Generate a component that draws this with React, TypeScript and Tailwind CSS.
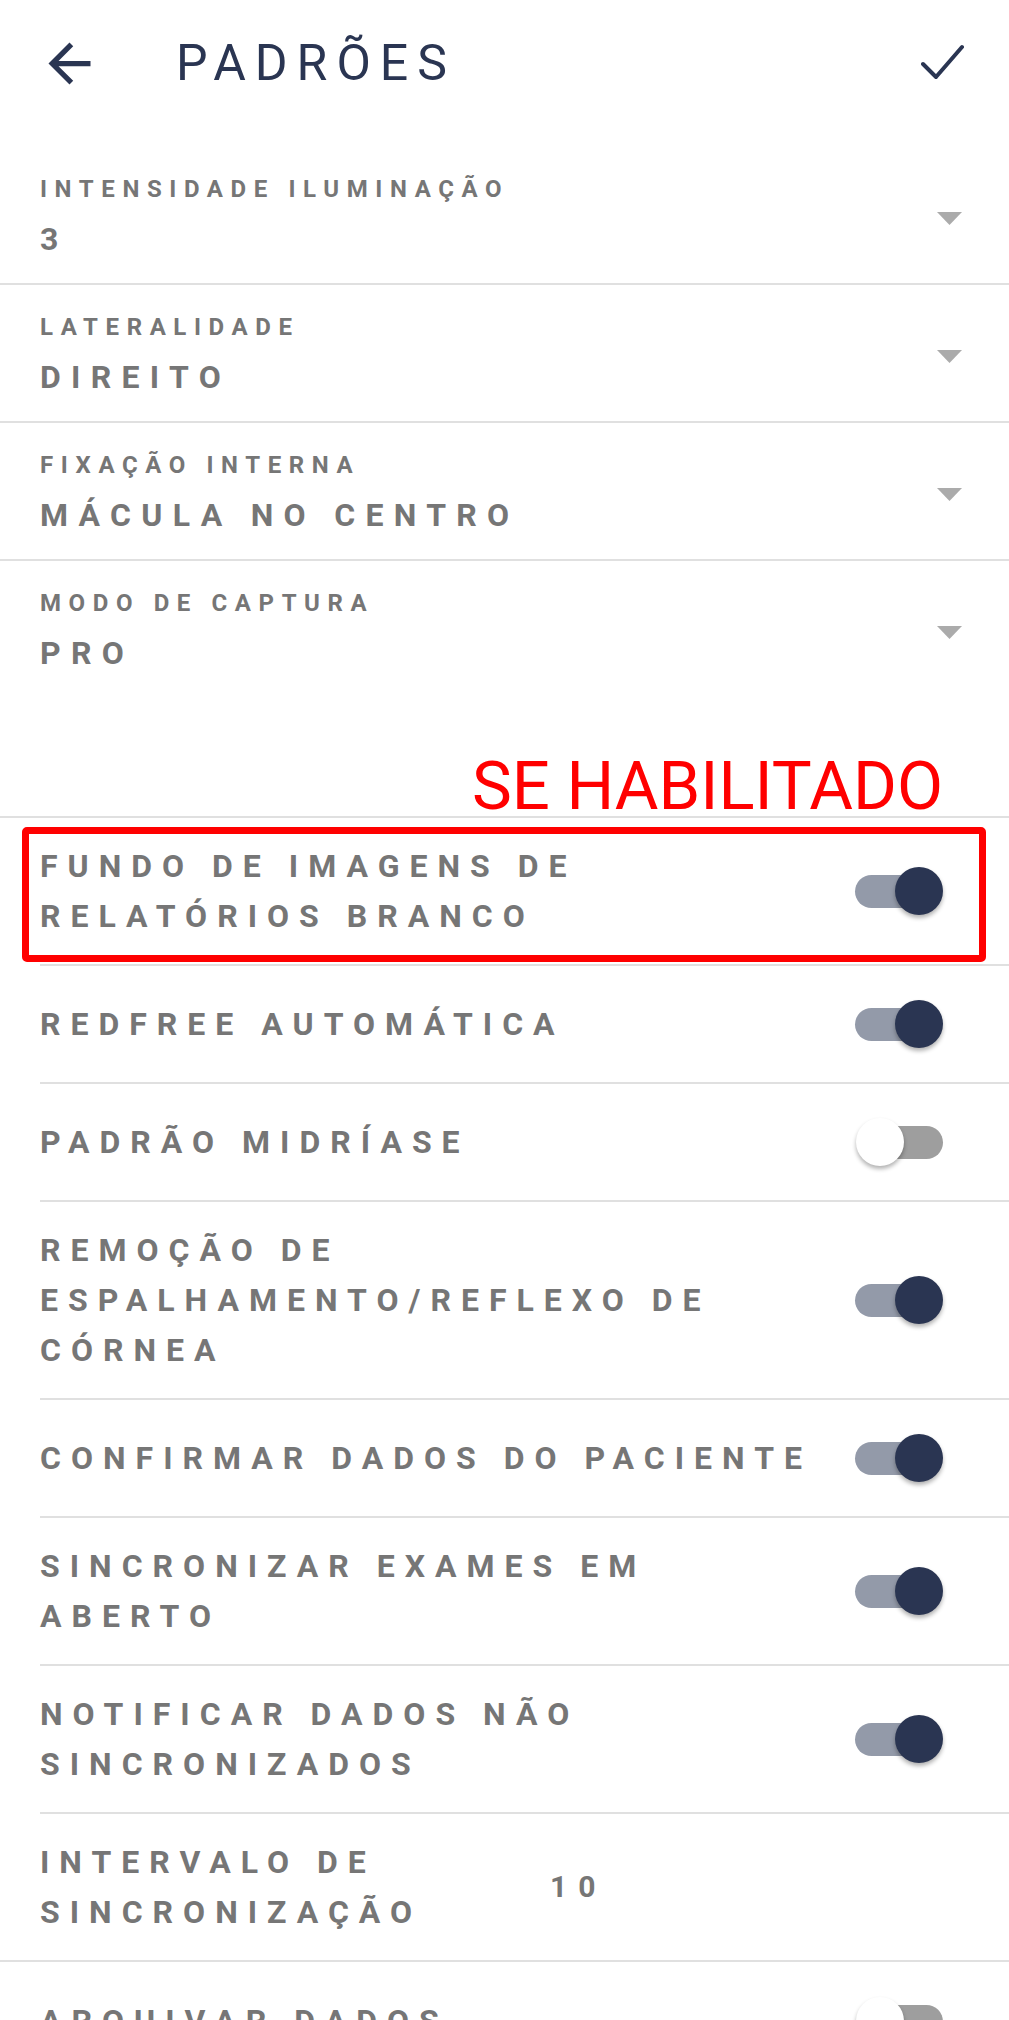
import React from "react";

const NAVY = "#2a3552";

const selects = [
  { label: "INTENSIDADE ILUMINAÇÃO", value: "3" },
  { label: "LATERALIDADE", value: "DIREITO" },
  { label: "FIXAÇÃO INTERNA", value: "MÁCULA NO CENTRO" },
  { label: "MODO DE CAPTURA", value: "PRO" },
];

const toggles = [
  { lines: ["FUNDO DE IMAGENS DE", "RELATÓRIOS BRANCO"], on: true, highlight: true },
  { lines: ["REDFREE AUTOMÁTICA"], on: true },
  { lines: ["PADRÃO MIDRÍASE"], on: false },
  { lines: ["REMOÇÃO DE", "ESPALHAMENTO/REFLEXO DE", "CÓRNEA"], on: true },
  { lines: ["CONFIRMAR DADOS DO PACIENTE"], on: true },
  { lines: ["SINCRONIZAR EXAMES EM", "ABERTO"], on: true },
  { lines: ["NOTIFICAR DADOS NÃO", "SINCRONIZADOS"], on: true },
];

function Toggle({ on }: { on: boolean }) {
  if (on) {
    return (
      <div className="flex shrink-0 items-center">
        <div className="h-[33px] w-[85px] rounded-full bg-[#939aa9]" />
        <div className="-ml-[45px] h-[48px] w-[48px] rounded-full bg-[#2a3552] shadow-[0_3px_4px_rgba(0,0,0,0.3)]" />
      </div>
    );
  }
  return (
    <div className="flex shrink-0 items-center">
      <div className="relative z-10 h-[48px] w-[48px] rounded-full bg-white shadow-[0_3px_4px_rgba(0,0,0,0.3)]" />
      <div className="-ml-[46px] h-[33px] w-[85px] rounded-full bg-[#9e9e9e]" />
    </div>
  );
}

function Lines({ lines }: { lines: string[] }) {
  return (
    <div className="text-[32px] font-bold leading-[50px] tracking-[10px] text-[#767676]">
      {lines.map((l) => (
        <div key={l} className="whitespace-nowrap">
          {l}
        </div>
      ))}
    </div>
  );
}

export default function App() {
  return (
    <div className="min-h-[2020px] w-full overflow-hidden bg-white font-[family-name:Roboto,sans-serif]">
      {/* header */}
      <div className="flex h-[126px] items-center justify-between pl-[38px] pr-[44px]">
        <div className="flex items-center">
          <svg width="63" height="63" viewBox="0 0 24 24" fill={NAVY}>
            <path d="M20 11H7.83l5.59-5.59L12 4l-8 8 8 8 1.41-1.41L7.83 13H20v-2z" />
          </svg>
          <h1 className="ml-[75px] text-[50px] font-normal leading-[50px] tracking-[9px] text-[#2a3552]">
            PADRÕES
          </h1>
        </div>
        <svg width="44" height="38" viewBox="0 0 44 38" fill="none">
          <polyline
            points="2,20 15,33 41,3"
            stroke={NAVY}
            strokeWidth="4"
            strokeLinecap="round"
            strokeLinejoin="round"
          />
        </svg>
      </div>

      {/* selects */}
      <div className="mt-[21px]">
        {selects.map((s, i) => (
          <div
            key={s.label}
            className={`flex items-center justify-between py-[24px] pl-[40px] pr-[47px] ${
              i < selects.length - 1 ? "border-b-2 border-[#e0e0e0]" : ""
            }`}
          >
            <div className="text-[#767676]">
              <div className="text-[24px] font-bold leading-[36px] tracking-[7.6px]">{s.label}</div>
              <div className="mt-[12px] text-[32px] font-bold leading-[40px] tracking-[10.3px]">{s.value}</div>
            </div>
            <svg width="25" height="13" viewBox="0 0 25 13" className="mt-[7px]">
              <polygon points="0,0 25,0 12.5,13" fill="#ababab" />
            </svg>
          </div>
        ))}
      </div>

      <div className="mt-[60px] border-b-2 border-[#e0e0e0] pr-[66px] text-right text-[67px] font-normal leading-[59px] text-[#ff0000]">
        SE HABILITADO
      </div>

      {/* toggles */}
      {toggles.map((t) => (
        <div key={t.lines[0]} className="relative pl-[40px]">
          <div className="flex min-h-[118px] items-center justify-between border-b-2 border-[#e0e0e0] py-[23px] pr-[66px]">
            <Lines lines={t.lines} />
            <Toggle on={t.on} />
          </div>
          {t.highlight && (
            <div className="absolute bottom-[4px] left-[22px] right-[23px] top-[9px] rounded-[5px] border-[7px] border-[#ff0000]" />
          )}
        </div>
      ))}

      <div className="flex min-h-[118px] items-center border-b-2 border-[#e0e0e0] py-[23px] pl-[40px] pr-[66px]">
        <div className="w-[510px]">
          <Lines lines={["INTERVALO DE", "SINCRONIZAÇÃO"]} />
        </div>
        <div className="text-[30px] font-bold leading-[40px] tracking-[11px] text-[#767676]">10</div>
      </div>

      <div className="pl-[40px]">
        <div className="flex min-h-[118px] items-center justify-between py-[23px] pr-[66px]">
          <Lines lines={["ARQUIVAR DADOS"]} />
          <Toggle on={false} />
        </div>
      </div>
    </div>
  );
}
